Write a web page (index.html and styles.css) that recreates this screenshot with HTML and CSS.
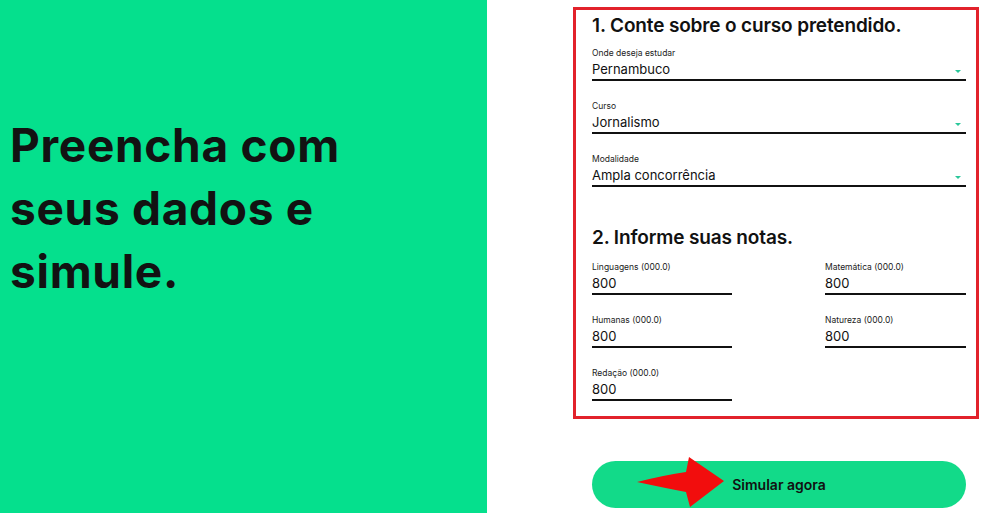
FILE: index.html
```html
<!DOCTYPE html>
<html lang="pt-BR">
<head>
<meta charset="utf-8">
<title>Simulador</title>
<link rel="stylesheet" href="styles.css">
</head>
<body>
<div class="page">
  <section class="hero">
    <h1 class="hero-title">Preencha com<br>seus dados e<br>simule.</h1>
  </section>
  <section class="side">
    <form class="box">
      <h2 class="step">1. Conte sobre o curso pretendido.</h2>
      <div class="field">
        <span class="label">Onde deseja estudar</span>
        <div class="select"><span class="value">Pernambuco</span><span class="caret"></span></div>
      </div>
      <div class="field">
        <span class="label">Curso</span>
        <div class="select"><span class="value">Jornalismo</span><span class="caret"></span></div>
      </div>
      <div class="field">
        <span class="label">Modalidade</span>
        <div class="select"><span class="value">Ampla concorrência</span><span class="caret"></span></div>
      </div>
      <h2 class="step step-2">2. Informe suas notas.</h2>
      <div class="grades">
        <div class="field grade">
          <span class="label">Linguagens (000.0)</span>
          <div class="select"><span class="value">800</span></div>
        </div>
        <div class="field grade">
          <span class="label">Matemática (000.0)</span>
          <div class="select"><span class="value">800</span></div>
        </div>
        <div class="field grade">
          <span class="label">Humanas (000.0)</span>
          <div class="select"><span class="value">800</span></div>
        </div>
        <div class="field grade">
          <span class="label">Natureza (000.0)</span>
          <div class="select"><span class="value">800</span></div>
        </div>
        <div class="field grade">
          <span class="label">Redação (000.0)</span>
          <div class="select"><span class="value">800</span></div>
        </div>
      </div>
    </form>
    <div class="actions">
      <button class="btn" type="button">Simular agora</button>
      <svg class="arrow" width="90" height="52" viewBox="0 0 90 52">
        <path d="M0 26 Q28 19 49 16 L52 1 L87 25 L53 51 L49 36 Q28 32 0 26 Z" fill="#f20d0d"/>
      </svg>
    </div>
  </section>
</div>
</body>
</html>
```
FILE: styles.css
```css
* { box-sizing: border-box; }
html, body { margin: 0; padding: 0; }
body {
  width: 984px;
  height: 513px;
  overflow: hidden;
  background: #fff;
  font-family: Inter, "Liberation Sans", sans-serif;
  color: #141414;
}
.page {
  display: flex;
  height: 513px;
}
.hero {
  width: 487px;
  flex: none;
  background: #05e08d;
  padding: 114px 0 0 10px;
}
.hero-title {
  margin: 0;
  font-size: 46px;
  line-height: 63px;
  font-weight: 700;
  letter-spacing: 0.7px;
  color: #121212;
}
.side {
  flex: none;
  padding: 7px 0 0 86px;
  width: 497px;
}
.box {
  width: 406px;
  height: 412px;
  border: 3px solid #e2222b;
  padding: 4px 10px 0 16px;
  display: flex;
  flex-direction: column;
}
.step {
  margin: 0;
  font-size: 19px;
  line-height: 24px;
  font-weight: 600;
  letter-spacing: -0.15px;
  color: #111;
}
.step-2 {
  margin-top: 39px;
}
.field {
  display: flex;
  flex-direction: column;
  margin-top: 10px;
}
.label {
  font-size: 8.5px;
  line-height: 11px;
  color: #222;
}
.select {
  display: flex;
  align-items: center;
  justify-content: space-between;
  height: 22px;
  border-bottom: 2px solid #111;
}
.value {
  font-size: 13px;
  line-height: 18px;
  color: #111;
}
.caret {
  width: 0;
  height: 0;
  margin-right: 5px;
  margin-top: 4px;
  border-left: 3px solid transparent;
  border-right: 3px solid transparent;
  border-top: 3px solid #2bc79a;
}
.field + .field { margin-top: 20px; }
.grades {
  display: grid;
  grid-template-columns: 140px 141px;
  justify-content: space-between;
  row-gap: 20px;
  margin-top: 12px;
}
.grades .field { margin-top: 0; }
.actions {
  position: relative;
  width: 406px;
  padding: 42px 13px 0 19px;
}
.btn {
  display: block;
  width: 374px;
  height: 47px;
  border: 0;
  border-radius: 24px;
  background: #12da89;
  font-family: Inter, "Liberation Sans", sans-serif;
  font-size: 14px;
  font-weight: 600;
  color: #111;
}
.arrow {
  position: absolute;
  left: 64px;
  top: 37px;
}
```
